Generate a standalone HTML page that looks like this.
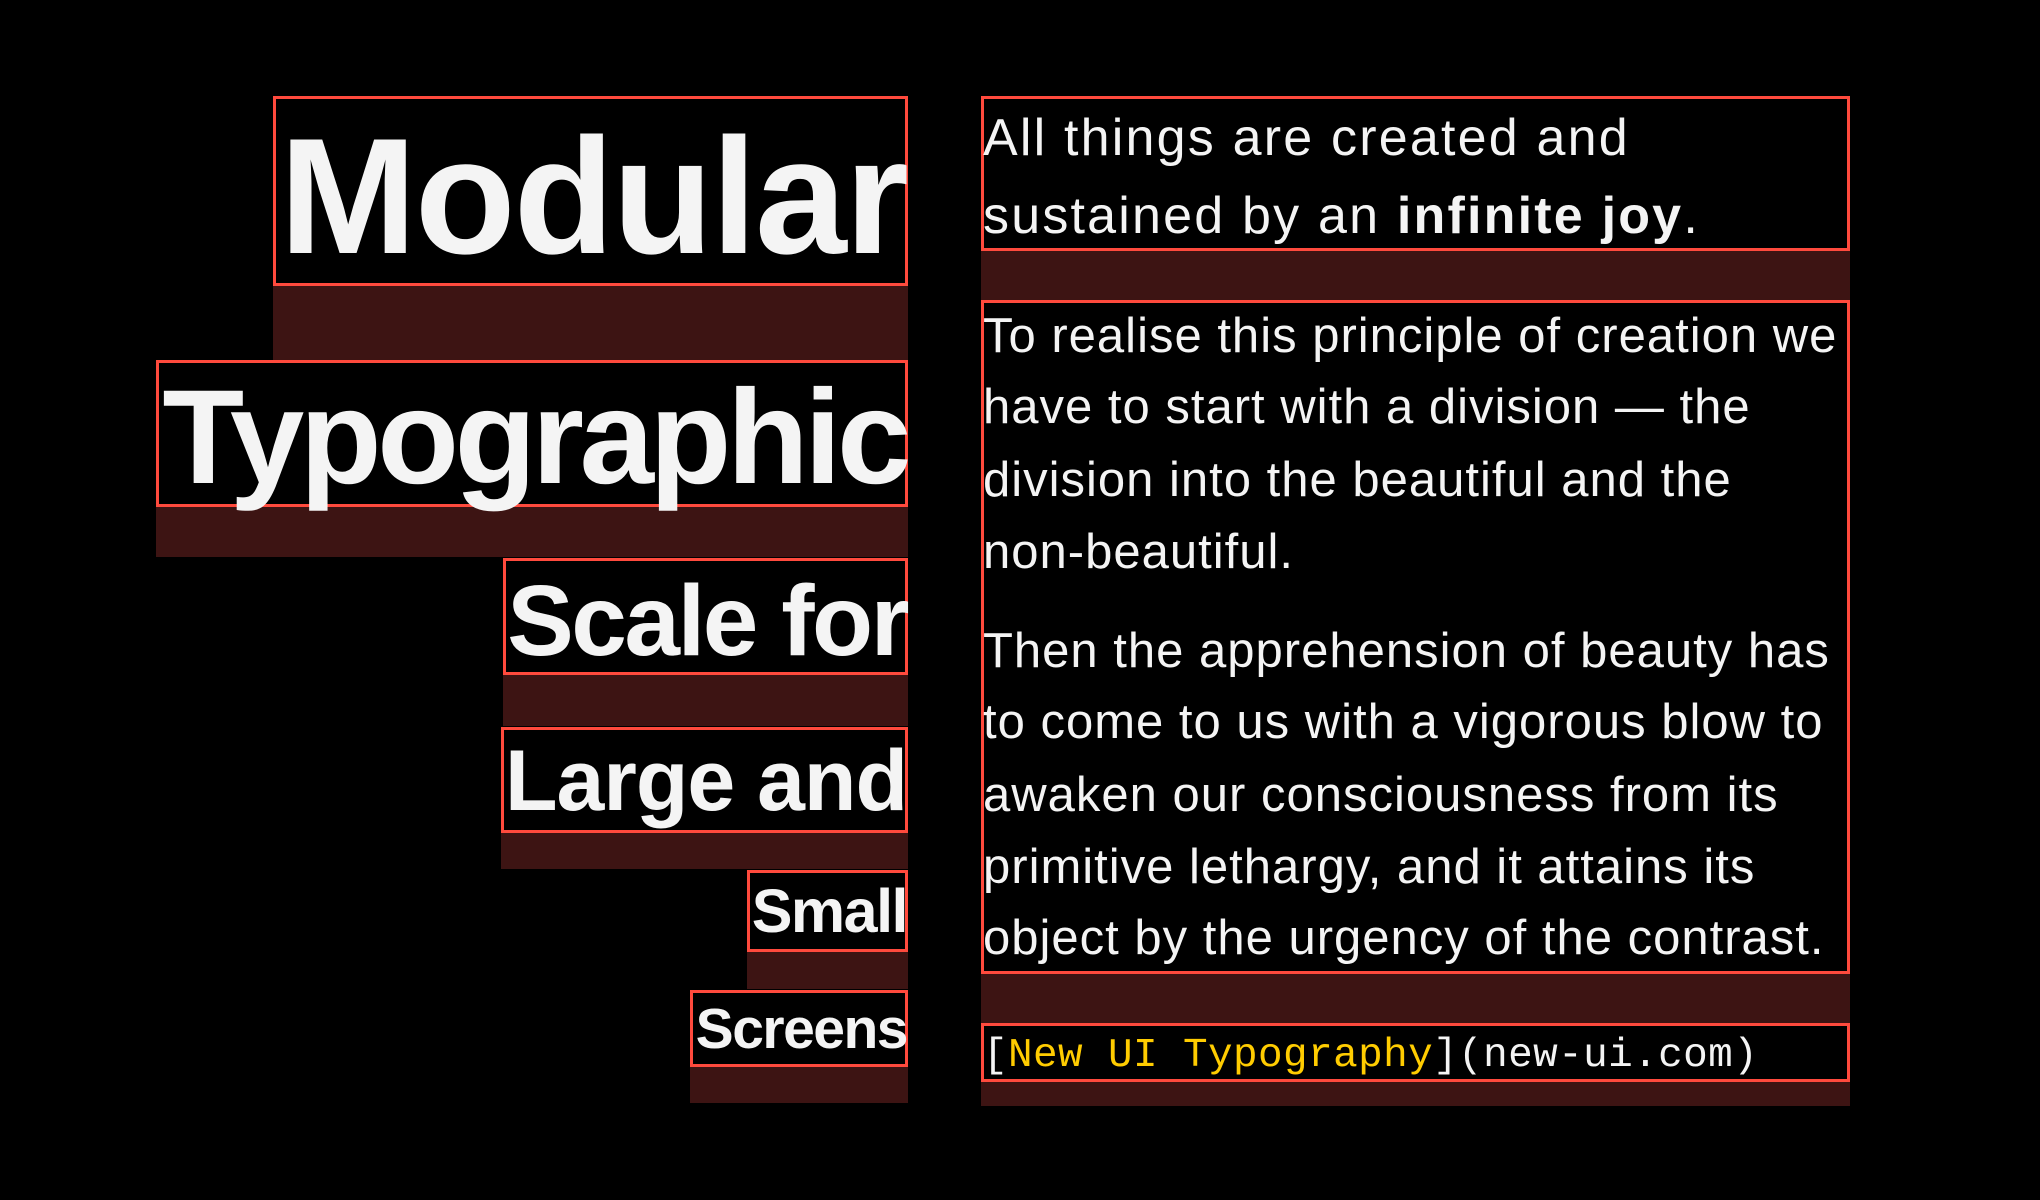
<!DOCTYPE html>
<html><head><meta charset="utf-8"><style>
html,body{margin:0;padding:0;background:#000;}
body{width:2040px;height:1200px;position:relative;overflow:hidden;font-family:"Liberation Sans",sans-serif;color:#f4f4f4;}
.m{position:absolute;background:#3d1413;}
.b{position:absolute;border:3px solid #ff4a3d;box-sizing:border-box;}
.w{position:absolute;right:1133px;line-height:1;font-weight:bold;white-space:nowrap;text-align:right;}
.t{position:absolute;left:983px;line-height:1;white-space:nowrap;}
.p{font-size:49px;letter-spacing:1px;}
.h{font-size:52px;letter-spacing:2.2px;}
</style></head><body>
<div class="m" style="left:273px;top:96px;width:635px;height:264px"></div>
<div class="m" style="left:156px;top:360px;width:752px;height:197px"></div>
<div class="m" style="left:503px;top:558px;width:405px;height:168px"></div>
<div class="m" style="left:501px;top:727px;width:407px;height:142px"></div>
<div class="m" style="left:747px;top:870px;width:161px;height:119px"></div>
<div class="m" style="left:690px;top:990px;width:218px;height:113px"></div>
<div class="m" style="left:981px;top:96px;width:869px;height:204px"></div>
<div class="m" style="left:981px;top:300px;width:869px;height:723px"></div>
<div class="m" style="left:981px;top:1023px;width:869px;height:83px"></div>
<div class="b" style="left:273px;top:96px;width:635px;height:190px;background:#000"></div>
<div class="b" style="left:156px;top:360px;width:752px;height:147px;background:#000"></div>
<div class="b" style="left:503px;top:558px;width:405px;height:117px;background:#000"></div>
<div class="b" style="left:501px;top:727px;width:407px;height:106px;background:#000"></div>
<div class="b" style="left:747px;top:870px;width:161px;height:82px;background:#000"></div>
<div class="b" style="left:690px;top:990px;width:218px;height:77px;background:#000"></div>
<div class="b" style="left:981px;top:96px;width:869px;height:155px;background:#000"></div>
<div class="b" style="left:981px;top:300px;width:869px;height:674px;background:#000"></div>
<div class="b" style="left:981px;top:1023px;width:869px;height:59px;background:#000"></div>
<div class="w" style="top:114px;font-size:165px;letter-spacing:-2px">Modular</div>
<div class="w" style="top:371px;font-size:134px;letter-spacing:-4.5px">Typographic</div>
<div class="w" style="top:571px;font-size:100px;letter-spacing:-2.5px">Scale for</div>
<div class="w" style="top:738px;font-size:86px;letter-spacing:-1px">Large and</div>
<div class="w" style="top:881px;font-size:61px;letter-spacing:-1.5px">Small</div>
<div class="w" style="top:1001px;font-size:57px;letter-spacing:-1.5px">Screens</div>
<div class="t h" style="top:112px">All things are created and</div>
<div class="t h" style="top:190px">sustained by an <b>infinite joy</b>.</div>
<div class="t p" style="top:312px">To realise this principle of creation we</div>
<div class="t p" style="top:383px">have to start with a division — the</div>
<div class="t p" style="top:456px">division into the beautiful and the</div>
<div class="t p" style="top:528px">non-beautiful.</div>
<div class="t p" style="top:627px">Then the apprehension of beauty has</div>
<div class="t p" style="top:698px">to come to us with a vigorous blow to</div>
<div class="t p" style="top:771px">awaken our consciousness from its</div>
<div class="t p" style="top:843px">primitive lethargy, and it attains its</div>
<div class="t p" style="top:914px">object by the urgency of the contrast.</div>
<div class="t" style="top:1036px;font-size:41px;letter-spacing:0.4px;font-family:'Liberation Mono',monospace">[<span style="color:#ffcc00">New UI Typography</span>](new-ui.com)</div>
</body></html>
